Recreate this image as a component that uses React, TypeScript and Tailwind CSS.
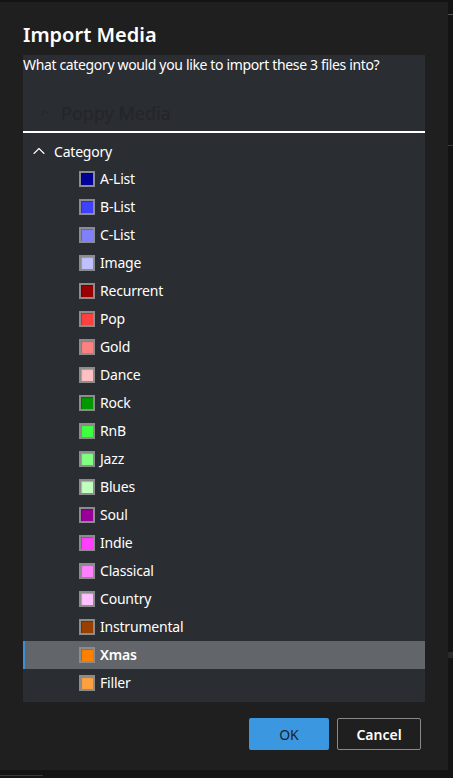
import { ChevronUp } from "lucide-react";

const categories = [
  { name: "A-List", color: "bg-[#000099]" },
  { name: "B-List", color: "bg-[#4040ff]" },
  { name: "C-List", color: "bg-[#8080ff]" },
  { name: "Image", color: "bg-[#c0c0ff]" },
  { name: "Recurrent", color: "bg-[#990000]" },
  { name: "Pop", color: "bg-[#ff4040]" },
  { name: "Gold", color: "bg-[#ff8080]" },
  { name: "Dance", color: "bg-[#ffc0c0]" },
  { name: "Rock", color: "bg-[#009900]" },
  { name: "RnB", color: "bg-[#40ff40]" },
  { name: "Jazz", color: "bg-[#80ff80]" },
  { name: "Blues", color: "bg-[#c0ffc0]" },
  { name: "Soul", color: "bg-[#990099]" },
  { name: "Indie", color: "bg-[#ff40ff]" },
  { name: "Classical", color: "bg-[#ff80ff]" },
  { name: "Country", color: "bg-[#ffc0ff]" },
  { name: "Instrumental", color: "bg-[#994000]" },
  { name: "Xmas", color: "bg-[#ff8000]" },
  { name: "Filler", color: "bg-[#ffa040]" },
];

const App = () => {
  const selected = "Xmas";

  return (
    <div className="w-[453px] h-[778px] bg-[#141414] overflow-hidden relative font-['Noto_Sans',sans-serif]">
      {/* bits of the window behind the dialog */}
      <div className="absolute right-0 top-[14px] w-[5px] h-[1px] bg-[#555]" />
      <div className="absolute right-0 top-[145px] w-[5px] h-[1px] bg-[#3a3a3a]" />
      <div className="absolute right-0 top-[652px] w-[5px] h-[6px] bg-[#2a2a2a]" />
      <div className="absolute left-0 bottom-[2px] w-[43px] h-[1px] bg-[#3a3a3a]" />

      <div className="mt-[2px] w-[448px] h-[768px] bg-[#1f1f1f] flex flex-col pl-[23px] pr-[23px]">
        <div className="pt-[19px] h-[53px] text-[20px] leading-[28px] font-semibold text-white">Import Media</div>

        <div className="bg-[#2a2d32] flex flex-col h-[647px]">
          <div className="text-[14px] leading-[20px] text-white tracking-[-0.35px]">
            What category would you like to import these 3 files into?
          </div>
          <div className="h-[56px] flex items-center pt-[20px] pl-[14px] text-[#232529]">
            <ChevronUp className="w-[16px] h-[16px]" strokeWidth={1.5} />
            <span className="ml-[8px] text-[18px] leading-[24px]">Poppy Media</span>
          </div>
          <div className="h-[2px] bg-white" />
          <div className="mt-[4px] h-[28px] flex items-center pl-[6px] text-white text-[14px]">
            <ChevronUp className="w-[20px] h-[20px]" strokeWidth={1.3} />
            <span className="ml-[5px] tracking-[-0.2px]">Category</span>
          </div>
          {categories.map((c) => (
            <div
              key={c.name}
              className={
                c.name === selected
                  ? "h-[28px] flex items-center pl-[54px] bg-[#626569] border-l-2 border-[#3b8fd6] font-semibold"
                  : "h-[28px] flex items-center pl-[54px] border-l-2 border-transparent"
              }
            >
              <div className={`w-[16px] h-[16px] border-2 border-[#8c8c8c] ${c.color} shadow-[inset_1px_1px_1px_rgba(0,0,0,0.25)]`} />
              <span className="ml-[5px] text-[14px] leading-[20px] text-white tracking-[-0.2px]">{c.name}</span>
            </div>
          ))}
        </div>

        <div className="mt-[16px] flex justify-end gap-[8px] pr-[4px]">
          <button className="w-[80px] h-[32px] bg-[#3b97e0] rounded-[2px] text-[14px] text-[#1f1f1f]">OK</button>
          <button className="w-[84px] h-[32px] border border-[#8a8a8a] rounded-[2px] text-[14px] text-white font-semibold">
            Cancel
          </button>
        </div>
      </div>
    </div>
  );
};

export default App;
